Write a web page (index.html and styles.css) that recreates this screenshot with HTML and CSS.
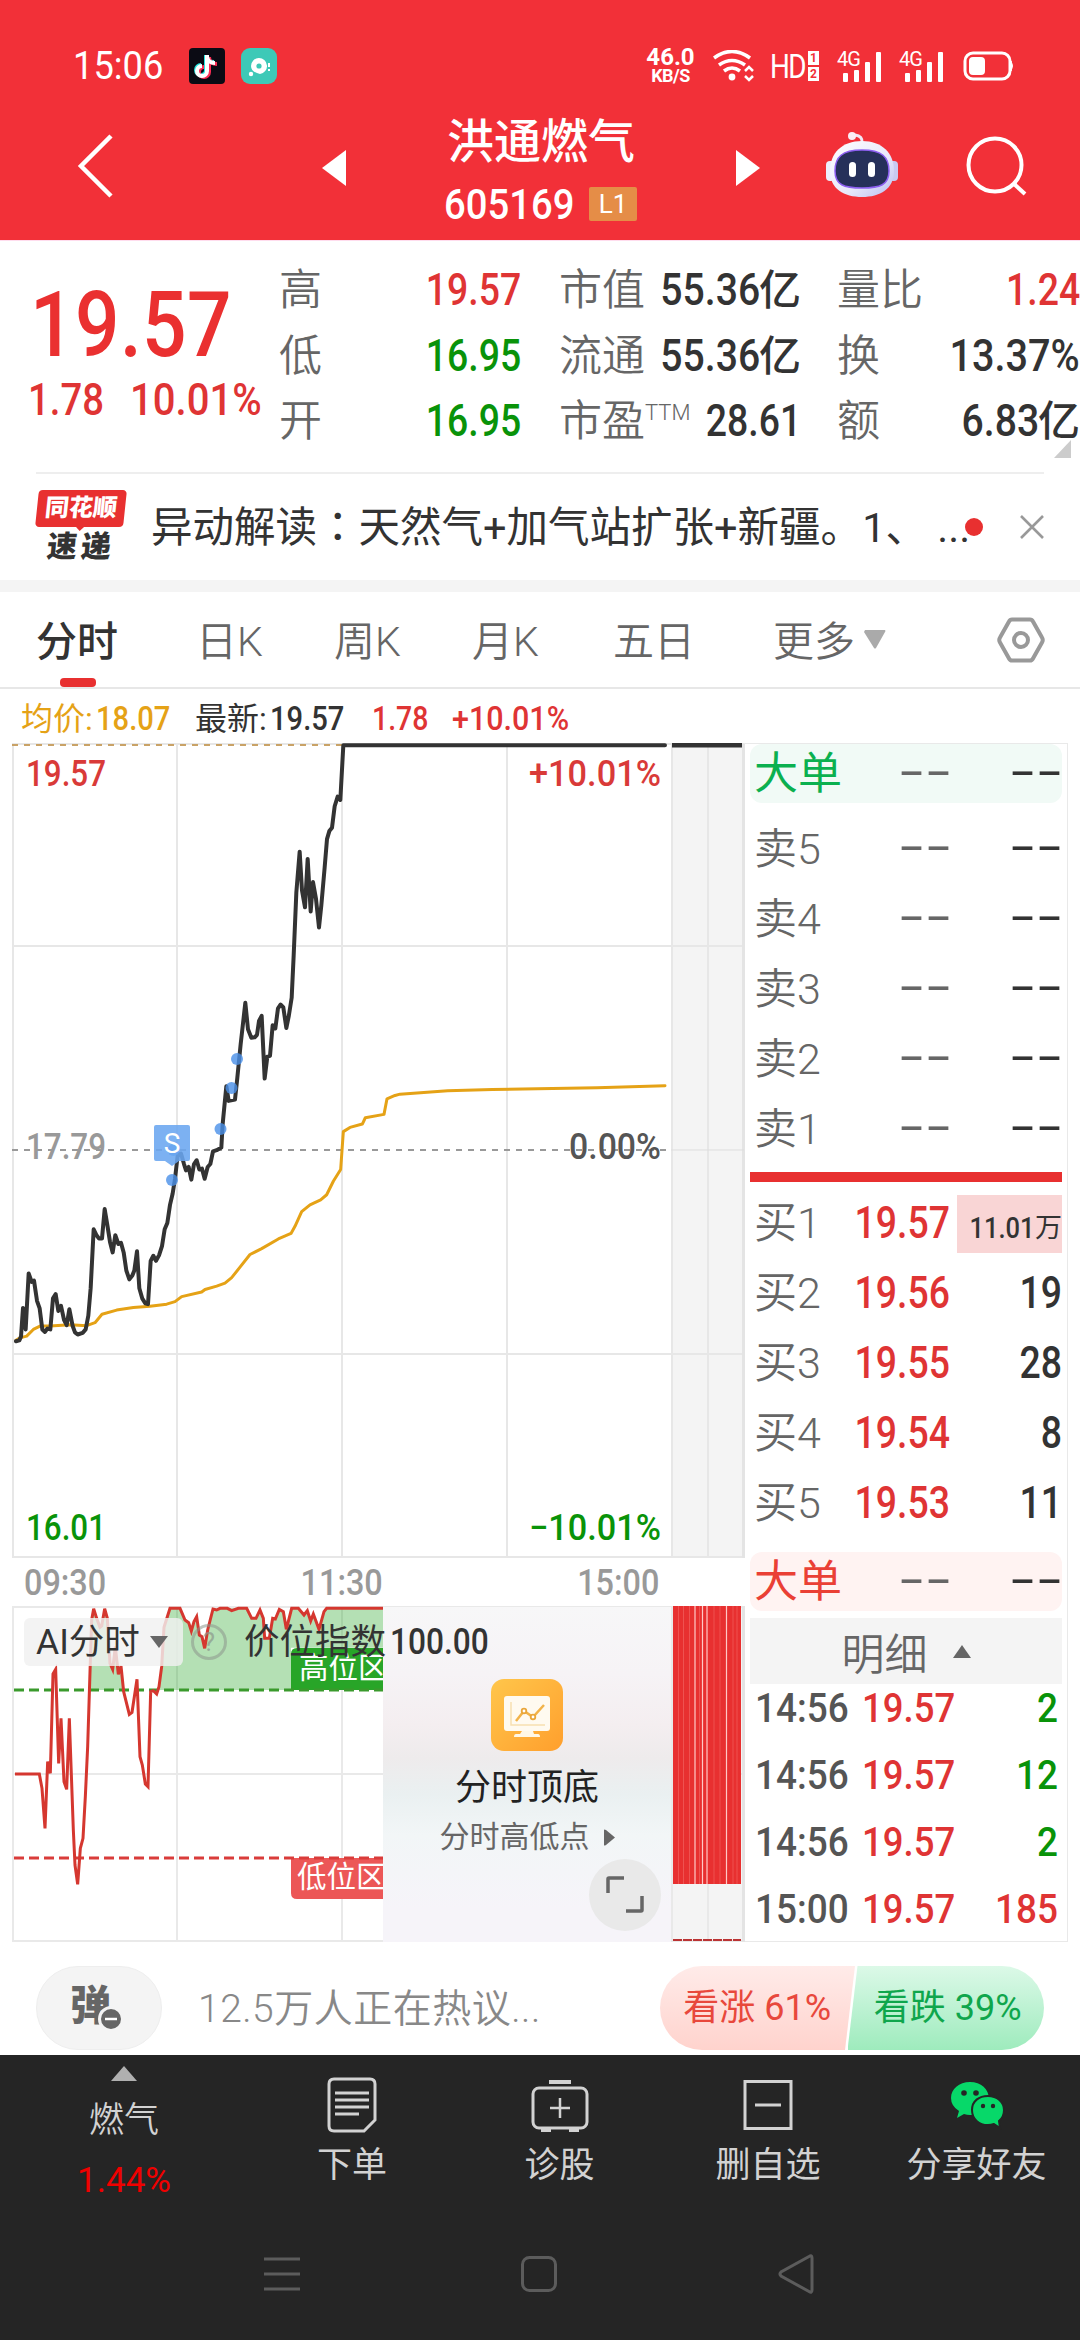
FILE: index.html
```html
<!DOCTYPE html>
<html lang="zh-CN">
<head>
<meta charset="utf-8">
<title>洪通燃气 605169</title>
<link rel="stylesheet" href="styles.css">
</head>
<body>
<div class="screen">
  <header class="top">
    <div class="status">
      <span class="clock"><b class="num">15:06</b></span>
      <svg class="app" width="36" height="36" viewBox="0 0 36 36"><rect width="36" height="36" rx="4" fill="#0b0b14"/><g fill="none" stroke-width="4"><path d="M18 8v15a5 5 0 1 1-5-5M18 8c0 5 4 7 8 7" stroke="#25e5e0" transform="translate(-1 -1)"/><path d="M18 8v15a5 5 0 1 1-5-5M18 8c0 5 4 7 8 7" stroke="#fb2c55" transform="translate(2 1)"/><path d="M18 7v16a5 5 0 1 1-5-5M18 8c0 5 4 7 8 7" stroke="#fff"/></g></svg>
      <svg class="app2" width="36" height="36" viewBox="0 0 36 36"><rect width="36" height="36" rx="9" fill="#3dc9b7"/><path d="M10 18a8 8 0 1 1 9 8l-3-1q-6-2-6-7z" fill="#fff"/><circle cx="18" cy="18" r="2.6" fill="#3dc9b7"/><circle cx="10" cy="26" r="2.2" fill="#fff"/><path d="M28 15v4M28 21v2" stroke="#fff" stroke-width="2"/></svg>
      <span class="speed"><b>46.0</b><i>KB/S</i></span>
      <svg class="wifi" width="42" height="32" viewBox="0 0 42 32"><g fill="none" stroke="#fff" stroke-width="3.6"><path d="M1 8q18-13 36 0M6 15q13-9 26 0M11 21q8-6 16 0"/></g><circle cx="19" cy="27" r="3.4" fill="#fff"/><path d="M32 21l4-4 4 4M32 26l4 4 4-4" fill="none" stroke="#fff" stroke-width="2.500"/></svg>
      <span class="hd"><b>HD</b><span class="sims"><i>1</i><i>2</i></span></span>
      <span class="cell"><i>4G</i><svg width="46" height="31" viewBox="0 0 46 31" fill="#fff"><rect x="6" y="22" width="5" height="9" rx="1"/><rect x="17" y="19" width="5" height="12" rx="1"/><rect x="28" y="11" width="5" height="20" rx="1"/><rect x="39" y="1" width="5" height="30" rx="1"/></svg></span>
      <span class="cell cell2"><i>4G</i><svg width="46" height="31" viewBox="0 0 46 31" fill="#fff"><rect x="6" y="22" width="5" height="9" rx="1"/><rect x="17" y="19" width="5" height="12" rx="1"/><rect x="28" y="11" width="5" height="20" rx="1"/><rect x="39" y="1" width="5" height="30" rx="1"/></svg></span>
      <svg class="bat" width="52" height="30" viewBox="0 0 52 30"><rect x="2" y="2" width="45" height="26" rx="8" fill="none" stroke="#fff" stroke-width="3"/><rect x="6" y="6" width="16" height="18" rx="4" fill="#fff"/><path d="M48 10q3 5 0 10z" fill="#fff" stroke="#fff"/></svg>
    </div>
    <div class="titlebar">
      <svg class="back" width="40" height="68" viewBox="0 0 40 68"><path d="M36 4L6 34l30 30" fill="none" stroke="#fff" stroke-width="4.5"/></svg>
      <svg class="prev" width="24" height="36" viewBox="0 0 24 36"><path d="M24 0v36L0 18z" fill="#fff"/></svg>
      <div class="stock">
        <h1>洪通燃气</h1>
        <div class="code"><b class="num">605169</b><span class="lv">L1</span></div>
      </div>
      <svg class="next" width="24" height="36" viewBox="0 0 24 36"><path d="M0 0v36l24-18z" fill="#fff"/></svg>
      <svg class="robot" width="72" height="68" viewBox="0 0 72 68">
        <defs><linearGradient id="rb" x1="0" y1="0" x2="1" y2="1"><stop offset="0" stop-color="#fff"/><stop offset=".6" stop-color="#e8e8fa"/><stop offset="1" stop-color="#b9bdf0"/></linearGradient></defs>
        <path d="M36 12q1-7-7-8" fill="none" stroke="#f2e8f5" stroke-width="3"/><circle cx="26" cy="5" r="4" fill="#fbeef5"/>
        <rect x="0" y="30" width="9" height="20" rx="4" fill="#eceefc"/><rect x="63" y="30" width="9" height="20" rx="4" fill="#c9caf1"/>
        <path d="M36 10c20 0 32 12 32 30S54 66 36 66 4 58 4 40 16 10 36 10z" fill="url(#rb)"/>
        <path d="M36 19c20 0 27 7 27 21s-9 17-27 17-27-3-27-17 7-21 27-21z" fill="#26305a" stroke="#8d5ff0" stroke-width="1.5"/>
        <rect x="23" y="31" width="7" height="15" rx="3.5" fill="#fff"/><rect x="42" y="31" width="7" height="15" rx="3.5" fill="#fff"/>
      </svg>
      <svg class="search" width="64" height="64" viewBox="0 0 64 64" fill="none" stroke="#fff" stroke-width="4"><circle cx="30" cy="30" r="26.5"/><path d="M48 48l12 11"/></svg>
    </div>
  </header>

  <section class="quote">
    <div class="last">
      <div class="price"><b class="num">19.57</b></div>
      <div class="chg"><b class="num">1.78</b><b class="num pct">10.01%</b></div>
    </div>
    <dl class="stats s1">
      <dt>高</dt><dd class="red"><b class="num r">19.57</b></dd>
      <dt>低</dt><dd class="green"><b class="num r">16.95</b></dd>
      <dt>开</dt><dd class="green"><b class="num r">16.95</b></dd>
    </dl>
    <dl class="stats s2">
      <dt>市值</dt><dd><b class="num r cap">55.36</b>亿</dd>
      <dt>流通</dt><dd><b class="num r cap">55.36</b>亿</dd>
      <dt>市盈<sup>TTM</sup></dt><dd><b class="num r">28.61</b></dd>
    </dl>
    <dl class="stats s3">
      <dt>量比</dt><dd class="red"><b class="num r">1.24</b></dd>
      <dt>换</dt><dd><b class="num r pct">13.37%</b></dd>
      <dt>额</dt><dd><b class="num r cap">6.83</b>亿</dd>
    </dl>
    <i class="corner"></i>
  </section>

  <section class="news">
    <div class="logo"><span class="brand">同花顺</span><span class="sub">速递</span></div>
    <p>异动解读<span class="colon" lang="zh-TW">：</span>天然气+加气站扩张+新疆。1、 ...</p>
    <i class="dot"></i>
    <svg width="24" height="24" viewBox="0 0 24 24"><path d="M1 1l22 22M23 1L1 23" stroke="#999" stroke-width="2.6"/></svg>
  </section>

  <nav class="tabs">
    <a class="on">分时</a><a>日K</a><a>周K</a><a>月K</a><a>五日</a><a class="more">更多<svg width="22" height="19" viewBox="0 0 22 19"><path d="M1 0h20q1 1 0 2L12 18q-1 1-2 0L0 2z" fill="#aaa"/></svg></a>
    <svg class="gear" width="48" height="46" viewBox="0 0 48 46" fill="none" stroke="#999" stroke-width="4"><path d="M15 2.500h18q2 0 3 2l9 16q1.500 2.500 0 5l-9 16q-1 2-3 2H15q-2 0-3-2l-9-16q-1.500-2.500 0-5l9-16q1-2 3-2z"/><circle cx="24" cy="23" r="7"/></svg>
  </nav>

  <div class="legend">
    <span class="avg">均价:<b class="num">18.07</b></span><span class="now">最新:<b class="num">19.57</b></span><span class="red c1"><b class="num">1.78</b></span><span class="red c2"><b class="num">+10.01%</b></span>
  </div>

  <main class="board">
    <div class="charts">
      <svg class="pricechart" width="746" height="816" viewBox="0 743 746 816">
        <rect x="671" y="744" width="73" height="813" fill="#f4f4f4"/>
        <g stroke="#e7e7e7" stroke-width="2" fill="none"><path d="M12 744H744M12 946H744M12 1354H744M12 1557H744M13 744V1558M177 744V1558M342 744V1558M507 744V1558M672 744V1558M708 744V1558"/></g>
        <path d="M743.500 744V1558" stroke="#e4e4e4" stroke-width="3"/>
        <path d="M12 745H342" stroke="#c9a266" stroke-width="2" stroke-dasharray="6 6"/>
        <path d="M12 1150H671" stroke="#999" stroke-width="2" stroke-dasharray="6 6"/>
        <path d="M671 1150H744" stroke="#ddd" stroke-width="1"/>
        <g transform="translate(0 720) scale(.33333 .42088)" fill="none" stroke-linejoin="round" stroke-linecap="round">
          <polyline vector-effect="non-scaling-stroke" stroke="#e5a216" stroke-width="3" points="48,1474 60,1468 80,1464 100,1448 120,1440 150,1440 210,1437 260,1439 285,1432 306,1412 350,1402 400,1396 450,1393 500,1388 525,1382 545,1370 605,1359 615,1353 650,1345 675,1338 695,1325 720,1300 750,1270 785,1256 835,1233 873,1220 885,1203 905,1168 930,1152 962,1140 980,1128 1000,1096 1022,1068 1030,978 1050,968 1087,960 1096,945 1152,937 1161,900 1185,892 1200,889 1343,881 1477,878 1791,874 1995,869"/>
          <polyline vector-effect="non-scaling-stroke" stroke="#333" stroke-width="4" points="48,1476 58,1474 63,1465 69,1397 77,1448 86,1315 95,1335 102,1332 111,1380 119,1398 127,1448 135,1454 142,1446 151,1448 159,1374 167,1364 175,1404 183,1392 192,1425 200,1438 208,1400 218,1440 225,1455 233,1460 248,1456 257,1448 265,1415 272,1350 281,1210 290,1225 297,1232 306,1232 314,1162 323,1205 330,1240 338,1265 346,1224 355,1245 363,1242 371,1265 379,1308 388,1329 397,1320 403,1308 411,1262 418,1350 427,1375 436,1386 444,1388 452,1285 460,1273 468,1285 477,1272 486,1250 494,1210 502,1195 510,1152 518,1125 525,1090 533,1035 543,1030 552,1055 558,1070 566,1062 574,1092 582,1055 590,1046 598,1068 606,1066 614,1090 623,1062 631,1055 639,1025 650,1022 664,1016 668,960 679,870 686,905 705,902 712,850 722,770 736,672 744,735 754,755 764,754 771,748 777,715 785,703 794,852 802,800 810,798 818,725 826,733 834,685 842,676 850,683 859,732 866,705 875,660 881,560 889,410 899,313 906,405 915,445 923,330 932,455 939,385 948,425 957,493 964,440 974,350 981,283 988,264 996,256 1004,205 1013,182 1021,190 1030,60 1995,60"/>
        </g>
        <rect x="672" y="742" width="70" height="5.500" fill="#333"/>
        <g fill="#4a90e8" fill-opacity=".8"><circle cx="172" cy="1180" r="6"/><circle cx="220.500" cy="1129" r="6"/><circle cx="231.500" cy="1088" r="6"/><circle cx="237" cy="1059" r="6"/><circle cx="173.500" cy="1150" r="6"/></g>
        <path d="M156 1125h32q2 0 2 2v32q0 2-2 2h-9l-7 5-7-5h-9q-2 0-2-2v-32q0-2 2-2z" fill="#6aa6f0" fill-opacity=".88"/>
        <text x="172" y="1153" text-anchor="middle" font-size="28" fill="#fff">S</text>
        <g font-size="36" font-weight="500">
          <text x="26" y="786" fill="#d93a38" textLength="80" lengthAdjust="spacingAndGlyphs">19.57</text>
          <text x="529" y="786" fill="#d93a38" textLength="132" lengthAdjust="spacingAndGlyphs">+10.01%</text>
          <text x="26" y="1159" fill="#999" textLength="80" lengthAdjust="spacingAndGlyphs">17.79</text>
          <text x="569" y="1159" fill="#555" textLength="92" lengthAdjust="spacingAndGlyphs">0.00%</text>
          <text x="26" y="1540" fill="#099309" textLength="80" lengthAdjust="spacingAndGlyphs">16.01</text>
          <text x="529" y="1540" fill="#099309" textLength="132" lengthAdjust="spacingAndGlyphs">−10.01%</text>
        </g>
      </svg>
      <div class="axis"><b class="num">09:30</b><b class="num ctr">11:30</b><b class="num r">15:00</b></div>
      <div class="indicator">
        <svg width="746" height="336" viewBox="0 1606 746 336">
          <defs><clipPath id="hi"><rect x="80" y="1600" width="303" height="90"/></clipPath><linearGradient id="og" x1="0" y1="0" x2="1" y2="1"><stop offset="0" stop-color="#ffc64b"/><stop offset="1" stop-color="#ff9f2d"/></linearGradient></defs>
          <rect x="671" y="1606" width="73" height="336" fill="#f4f4f4"/>
          <path d="M12 1607H744M12 1774H744M12 1941H744M13 1606V1942M177 1606V1942M342 1606V1942M672 1606V1942M708 1606V1942" stroke="#e9e9e9" stroke-width="2"/>
          <path d="M743.500 1606V1942" stroke="#e4e4e4" stroke-width="3"/>
          <path d="M297 1648h86v42h-92v-36q0-6 6-6z" fill="#28a528"/>
          <path d="M291 1858h92v41h-86q-6 0-6-6z" fill="#ec5757"/>
          <text x="299" y="1678" font-size="29.500" fill="#fff">高位区</text>
          <text x="297" y="1887" font-size="29.500" fill="#fff">低位区</text>
          <g clip-path="url(#hi)"><path transform="translate(0 1540) scale(.33333)" fill="#28a528" fill-opacity=".35" d="M268 450 275,240 281,206 290,235 300,262 305,258 314,206 322,235 330,370 338,388 346,320 355,403 363,378 371,455 388,523 396,517 411,418 420,650 427,675 436,732 444,740 452,455 460,452 470,462 477,440 485,380 492,262 510,205 540,205 555,240 566,248 574,273 582,245 590,230 598,285 606,290 614,325 623,270 639,207 650,210 660,205 740,205 755,235 768,235 780,210 790,235 794,295 808,295 818,235 826,237 838,208 850,215 859,268 875,205 895,205 912,225 922,212 932,243 940,222 957,268 972,215 980,205 1149,205V323H873V450z"/></g>
          <path d="M14 1690H383" stroke="#3a9a2c" stroke-width="3" stroke-dasharray="10 5"/>
          <path d="M14 1858H383" stroke="#d93c3a" stroke-width="3" stroke-dasharray="10 5"/>
          <polyline transform="translate(0 1540) scale(.33333)" fill="none" stroke="#d5372f" stroke-width="9" points="45,702 118,702 126,745 135,865 143,665 151,700 159,402 167,388 176,670 183,535 192,725 200,748 208,535 220,870 225,975 233,1033 241,925 249,895 256,770 263,620 268,460 275,240 281,206 290,235 300,262 305,258 314,206 322,235 330,370 338,388 346,320 355,403 363,378 371,455 388,523 396,517 411,418 420,650 427,675 436,732 444,740 452,455 460,452 470,462 477,440 485,380 492,262 510,205 540,205 555,240 566,248 574,273 582,245 590,230 598,285 606,290 614,325 623,270 639,207 650,210 660,205 682,205 695,212 715,205 740,205 755,235 768,235 780,210 790,235 794,295 808,295 818,235 826,237 838,208 850,215 859,268 875,205 895,205 912,225 922,212 932,243 940,222 957,268 972,215 980,205 1149,205"/>
          <rect x="673" y="1606" width="68" height="278" fill="#e83030"/>
          <path d="M695 1606v278M702.500 1606v278M707 1606v278M726.500 1606v278" stroke="#ffc9c6" stroke-width="1.200"/>
          <path d="M678.500 1606v278M683.500 1606v278M689.500 1606v278M699.500 1606v278M714 1606v278M720 1606v278M733 1606v278M737 1606v278" stroke="#f26a66" stroke-width=".6"/>
          <path d="M673 1940h68" stroke="#b33" stroke-width="2" stroke-dasharray="9 1"/>
        </svg>
        <div class="promo">
          <svg width="72" height="72" viewBox="0 0 72 72"><rect width="72" height="72" rx="13" fill="url(#og)"/><rect x="13" y="17" width="46" height="35" rx="3" fill="#fffaf0"/><path d="M31 52h11l1 3h4q2 0 2 3H23q0-3 2-3h4z" fill="#fff7e6"/><path d="M20 23v23h34" fill="none" stroke="#f8dfb0" stroke-width="1.500"/><path d="M25 42l8-10 9 6 11-12" fill="none" stroke="#f2b34a" stroke-width="2.500"/><circle cx="33" cy="32" r="2.300" fill="#fff" stroke="#eaa63a" stroke-width="1.800"/><circle cx="42" cy="38" r="2.300" fill="#fff" stroke="#eaa63a" stroke-width="1.800"/></svg>
          <strong>分时顶底</strong>
          <span>分时高低点<svg width="11" height="17" viewBox="0 0 11 17"><path d="M0 1q0-1 2 0l9 7.500L2 16q-2 1-2 0z" fill="#666"/></svg></span>
        </div>
        <div class="picker"><span class="drop">AI分时<svg width="18" height="12" viewBox="0 0 18 12"><path d="M0 0h18L9 12z" fill="#666"/></svg></span><i class="help">?</i><span class="idx">价位指数<b class="num">100.00</b></span></div>
        <svg class="expand" width="72" height="72" viewBox="0 0 72 72"><circle cx="36" cy="36" r="36" fill="#e9e9e9"/><path d="M19 34V20q0-1 1-1h15M37 52h15q1 0 1-1V37" fill="none" stroke="#666" stroke-width="3.500"/></svg>
      </div>
    </div>

    <div class="book">
      <div class="row big sell"><span>大单</span><em>--</em><em class="d">--</em></div>
      <div class="asks">
        <div class="row"><span>卖5</span><em>--</em><em class="d">--</em></div>
        <div class="row"><span>卖4</span><em>--</em><em class="d">--</em></div>
        <div class="row"><span>卖3</span><em>--</em><em class="d">--</em></div>
        <div class="row"><span>卖2</span><em>--</em><em class="d">--</em></div>
        <div class="row"><span>卖1</span><em>--</em><em class="d">--</em></div>
      </div>
      <div class="ratio"></div>
      <div class="bids">
        <div class="row"><span>买1</span><b class="num r p">19.57</b><div class="q hot"><b class="num r">11.01</b>万</div></div>
        <div class="row"><span>买2</span><b class="num r p">19.56</b><div class="q"><b class="num r">19</b></div></div>
        <div class="row"><span>买3</span><b class="num r p">19.55</b><div class="q"><b class="num r">28</b></div></div>
        <div class="row"><span>买4</span><b class="num r p">19.54</b><div class="q"><b class="num r">8</b></div></div>
        <div class="row"><span>买5</span><b class="num r p">19.53</b><div class="q"><b class="num r">11</b></div></div>
      </div>
      <div class="row big buy"><span>大单</span><em>--</em><em class="d">--</em></div>
      <div class="detail">明细<svg width="18" height="13" viewBox="0 0 18 13"><path d="M9 0l9 13H0z" fill="#666"/></svg></div>
      <div class="trades">
        <div><b class="num t">14:56</b><b class="num r red">19.57</b><b class="num r green">2</b></div>
        <div><b class="num t">14:56</b><b class="num r red">19.57</b><b class="num r green">12</b></div>
        <div><b class="num t">14:56</b><b class="num r red">19.57</b><b class="num r green">2</b></div>
        <div><b class="num t">15:00</b><b class="num r red">19.57</b><b class="num r red">185</b></div>
      </div>
    </div>
  </main>

  <section class="talk">
    <div class="danmu">弹<svg width="26" height="26" viewBox="0 0 26 26"><circle cx="13" cy="13" r="11.500" fill="#666" stroke="#f4f4f4" stroke-width="3"/><path d="M7 13h12" stroke="#fff" stroke-width="2.500"/></svg></div>
    <p>12.5万人正在热议...</p>
    <div class="vote"><span class="up">看涨 61%</span><span class="down">看跌 39%</span></div>
  </section>

  <footer>
    <div class="menu">
      <div class="sector"><svg width="26" height="15" viewBox="0 0 26 15"><path d="M13 0l13 15H0z" fill="#b0b0b0"/></svg><span>燃气</span><b>1.44%</b></div>
      <div class="item"><svg width="50" height="56" viewBox="0 0 50 56" fill="none" stroke="#d2d2d2" stroke-width="3"><path d="M7 2h36q5 0 5 5v36L37 54H7q-5 0-5-5V7q0-5 5-5z"/><path d="M8 16h34M8 23h34M8 30h34M8 37h24"/></svg><span>下单</span></div>
      <div class="item"><svg width="58" height="56" viewBox="0 0 58 56" fill="none" stroke="#d2d2d2" stroke-width="3"><rect x="2" y="11" width="54" height="40" rx="6"/><path d="M18 5h22" stroke-width="4"/><path d="M10 53h10M38 53h10" stroke-width="4"/><path d="M29 21v20M19 31h20" stroke-width="2.500"/></svg><span>诊股</span></div>
      <div class="item"><svg width="50" height="56" viewBox="0 0 50 56" fill="none" stroke="#d2d2d2" stroke-width="3"><rect x="2" y="4.500" width="46" height="47"/><path d="M12 28h26"/></svg><span>删自选</span></div>
      <div class="item"><svg width="56" height="56" viewBox="0 0 56 56"><path d="M21 5c11 0 19 7 19 17S32 38 21 38q-3 0-6-1l-7 4 2-7Q2 29 2 21C2 12 10 5 21 5z" fill="#07d869"/><path d="M39 19c9 0 16 6 16 14q0 7-5 11l1 7-6-4q-3 1-6 1c-9 0-16-6-16-15s7-14 16-14z" fill="#07d869" stroke="#252525" stroke-width="2"/><g fill="#252525"><circle cx="15" cy="16" r="2.800"/><circle cx="27" cy="16" r="2.800"/><circle cx="34" cy="29" r="2.200"/><circle cx="44" cy="29" r="2.200"/></g></svg><span>分享好友</span></div>
    </div>
    <div class="sys">
      <svg width="36" height="36" viewBox="0 0 36 36" stroke="#5c5c5c" stroke-width="3"><path d="M0 3h36M0 18h36M0 33h36"/></svg>
      <svg width="36" height="36" viewBox="0 0 36 36" fill="none" stroke="#5c5c5c" stroke-width="3"><rect x="1.500" y="1.500" width="33" height="33" rx="7"/></svg>
      <svg width="36" height="40" viewBox="0 0 36 40" fill="none" stroke="#5c5c5c" stroke-width="3"><path d="M31 2.500q3-2 3 1.500v32q0 3.500-3 1.500L3 22q-2-2 0-4z"/></svg>
    </div>
  </footer>
</div>
</body>
</html>
```
FILE: styles.css
```css
* { box-sizing: border-box; }
body { margin: 0; }
h1, p, dl, dt, dd { margin: 0; font-weight: 400; }
i, em { font-style: normal; }
svg { display: block; flex: none; }
.screen {
  width: 1080px; height: 2340px; overflow: hidden; background: #fff; color: #333;
  font-family: Roboto, "Noto Sans CJK SC", sans-serif;
}
/* tabular figures are drawn slightly condensed */
.num { display: inline-block; font-weight: 500; transform: scaleX(.85); transform-origin: left center; white-space: nowrap; }
.num.r { transform-origin: right center; }
.num.ctr { transform-origin: center; }
.red { color: #df3434; }
.green { color: #099309; }

.top { height: 240px; background: #f23038; color: #fff; }
.status { height: 100px; padding: 32px 46px 0 73px; display: flex; align-items: center; }
.clock { font-size: 39px; width: 116px; }
.clock .num { font-weight: 400; transform: scaleX(.93); }
.app2 { margin-left: 16px; }
.speed { margin-left: 369px; width: 49px; display: flex; flex-direction: column; align-items: center; line-height: 18px; }
.speed b { font-size: 24px; font-weight: 700; line-height: 20px; }
.speed i { font-size: 18px; font-weight: 700; letter-spacing: -.5px; }
.wifi { margin-left: 18px; }
.hd { margin-left: 15px; display: flex; align-items: center; width: 52px; }
.hd b { font-size: 34px; font-weight: 400; letter-spacing: -2px; width: 36px; transform: scaleX(.82); transform-origin: left; }
.sims { margin-left: 2px; display: flex; flex-direction: column; gap: 2px; }
.sims i { width: 11px; height: 14px; background: #fff; color: #f23038; font-size: 12px; font-weight: 700; line-height: 14px; text-align: center; }
.cell { position: relative; margin-left: 15px; }
.cell2 { margin-left: 16px; }
.cell i { position: absolute; left: 0; top: -2px; font-size: 20px; line-height: 20px; letter-spacing: -1px; }
.bat { margin-left: 18px; }
.titlebar { height: 140px; padding: 15px 51px 0 75px; display: flex; align-items: flex-start; }
.back { margin-top: 17px; }
.prev { margin: 35px 0 0 207px; }
.stock { width: 390px; }
.stock h1 { font-size: 47px; line-height: 54px; font-weight: 500; text-align: center; white-space: nowrap; }
.code { display: flex; align-items: center; margin-top: 16px; font-size: 43px; line-height: 38px; padding-left: 98px; }
.code .num { width: 145px; transform: scaleX(.89); }
.lv { width: 48px; height: 34px; background: #e58d47; border-radius: 2px; font-size: 26px; line-height: 35px; text-align: center; }
.next { margin-top: 35px; }
.robot { margin: 16px 0 0 66px; }
.search { margin: 20px 0 0 67px; }

.quote { position: relative; height: 232px; padding: 16px 0 0 28px; display: flex; border-top: 1px solid #fde; }
.last { width: 251px; color: #ea3030; }
.price { font-size: 90px; line-height: 100px; margin: 19px 0 0 2px; letter-spacing: .5px; white-space: nowrap; }
.price .num { transform: scaleX(.87); }
.chg { display: flex; font-size: 44px; line-height: 54px; margin-top: -3px; color: #df3434; }
.chg .num { width: 102px; transform: scaleX(.87); }
.chg .pct { transform: scaleX(.91); }
.stats { display: grid; grid-template-columns: 86px 1fr; grid-auto-rows: 65.500px; line-height: 67px; font-size: 43px; white-space: nowrap; }
.stats dt { color: #666; font-weight: 350; font-size: 43px; }
.stats dd { display: flex; justify-content: flex-end; font-weight: 500; font-size: 42px; }
.stats dd .num { font-size: 44px; }
.stats dd .pct { transform: scaleX(.9); }
.stats dd .cap { transform: scaleX(.89); }
.stats .cap { margin-right: -1px; }
.stats sup { font-size: 22px; line-height: 20px; vertical-align: 16px; }
.s1 { width: 242px; }
.s2 { width: 242px; margin-left: 38px; }
.s3 { width: 243px; margin-left: 36px; }
.corner { position: absolute; right: 9px; bottom: 14px; width: 17px; height: 18px; background: #ccc; clip-path: polygon(100% 0, 100% 100%, 0 100%); }

.news { position: relative; height: 108px; margin: 0 36px; border-top: 2px solid #eee; display: flex; align-items: center; }
.logo { width: 88px; height: 72px; margin-top: -2px; color: #333; text-align: center; display: flex; flex-direction: column; transform: translateX(1px); }
.brand { height: 37px; background: #e83030; border-radius: 4px; color: #fff; font-size: 24px; line-height: 37px; font-weight: 900; transform: skewX(-6deg); position: relative; }
.brand::after { content: ""; position: absolute; left: 40px; top: 36px; border: 5px solid transparent; border-top-color: #e83030; border-bottom: 0; }
.sub { font-size: 30px; line-height: 32px; margin-top: 4px; font-weight: 900; letter-spacing: 4px; transform: skewX(-6deg); }
.news p { margin-left: 27px; width: 812px; font-size: 41.500px; line-height: 60px; padding-top: 2px; white-space: nowrap; color: #333; }
.colon { font-family: "Noto Sans CJK TC", sans-serif; line-height: 1; }
.dot { width: 18px; height: 18px; border-radius: 50%; background: #e83030; margin-left: 2px; }
.news > svg { margin-left: auto; }

.tabs { height: 109px; border-top: 12px solid #f4f4f4; border-bottom: 2px solid #e7e7e7; padding-left: 36px; display: flex; align-items: center; font-size: 41px; color: #666; font-weight: 350; white-space: nowrap; }
.tabs a { position: relative; width: 138px; height: 95px; line-height: 100px; }
.tabs a.on { width: 160px; color: #333; font-weight: 500; }
.tabs .on::after { content: ""; position: absolute; left: 24px; bottom: 0; width: 36px; height: 9px; border-radius: 4px; background: #e83030; }
.tabs a:nth-child(4) { width: 141px; }
.tabs a:nth-child(5) { width: 160px; }
.tabs .more { width: 224px; display: flex; align-items: center; gap: 9px; padding-top: 4px; }
.more svg { margin-top: -4px; }

.legend { height: 54px; padding-left: 21px; display: flex; font-size: 32px; line-height: 60px; white-space: nowrap; }
.legend .num { font-size: 33.500px; }
.avg .num, .now .num { margin-left: 3px; transform: scaleX(.87); }
.avg { width: 174px; color: #e5a216; }
.now { width: 177px; }
.c1 { width: 80px; }
.c2 .num { transform: scaleX(.91); }

.board { height: 1199px; display: flex; }
.charts { width: 744px; }
.axis { height: 47px; padding: 0 85px 0 24px; display: flex; justify-content: space-between; font-size: 36px; line-height: 49px; color: #999; }
.axis .num { transform: scaleX(.9); }
.indicator { position: relative; height: 336px; }
.promo { position: absolute; left: 383px; top: 1px; width: 288px; height: 335px; padding-top: 72px; display: flex; flex-direction: column; align-items: center; background: linear-gradient(#f7f7f8, #f6f3f6 20%, #f4eef0 35%, #eeebec 45%, #eaf0f1 56%, #f2f6f7 68%, #f6f4f9 90%); color: #222; }
.promo strong { font-size: 36px; line-height: 44px; margin-top: 15px; font-weight: 400; }
.promo span { display: flex; align-items: center; gap: 14px; font-size: 30px; line-height: 36px; margin-top: 9px; color: #666; }
.picker { position: absolute; left: 24px; top: 12px; height: 48px; display: flex; align-items: center; font-size: 35.500px; line-height: 50px; white-space: nowrap; }
.drop { width: 159px; height: 48px; padding-left: 12px; background: rgba(240, 240, 240, .82); border-radius: 6px; display: flex; align-items: center; gap: 10px; }
.help { width: 36px; height: 36px; margin-left: 8px; border: 3px solid rgba(140, 150, 140, .55); border-radius: 50%; font-size: 26px; line-height: 31px; text-align: center; color: rgba(140, 150, 140, .7); }
.idx { margin-left: 17px; }
.idx .num { font-size: 36px; margin-left: 4px; transform: scaleX(.88); }
.expand { position: absolute; left: 589px; top: 253px; }

.book { width: 324px; border: 1px solid #e9e9e9; border-left: 0; padding: 0 5px 0 6px; }
.row { height: 70px; padding: 0 0 0 4px; display: flex; align-items: center; font-size: 43px; line-height: 60px; color: #666; }
.row span { width: 146px; font-weight: 350; white-space: nowrap; }
.row em { width: 111px; margin-top: -8px; font: 44px/50px "DejaVu Sans", sans-serif; white-space: nowrap; transform: scaleX(1.7); transform-origin: left; color: #666; }
.row em.d { width: 32px; color: #333; }
.row span + em { margin-left: -2px; }
.big { height: 59px; border-radius: 12px; }
.big span { font-size: 44px; font-weight: 400; }
.sell { background: #f1faf6; }
.sell span { color: #0bb04f; }
.buy { background: #fff3f2; margin-top: 14px; }
.buy span { color: #ea4035; }
.asks { padding-top: 11px; }
.ratio { height: 10px; margin-top: 8px; background: #e83030; }
.bids { padding-top: 6px; }
.bids .row span { width: 75px; }
.p { width: 121px; text-align: right; color: #df3434; font-size: 44px; }
.q { margin-left: auto; width: 105px; height: 58px; display: flex; justify-content: flex-end; align-items: center; font-size: 44px; color: #333; }
.hot { background: #f9d5d5; font-size: 27px; padding-top: 7px; margin-top: 2px; }
.hot .num { font-size: 30px; }
.detail { height: 66px; margin-top: 7px; background: #f4f4f4; display: flex; align-items: center; justify-content: center; gap: 25px; font-size: 43px; font-weight: 350; color: #666; }
.trades { padding: 0 4px 0 5px; margin-top: -9px; font-size: 41px; line-height: 67px; }
.trades div { height: 67px; display: grid; grid-template-columns: 104px 93px 1fr; text-align: right; }
.trades .t { text-align: left; color: #555; }
.trades .num { transform: scaleX(.9); }
.trades .num.red:nth-child(2) { margin-left: -8px; transform: scaleX(.89); }

.talk { height: 113px; padding: 24px 36px 0; display: flex; align-items: flex-start; }
.danmu { position: relative; width: 126px; height: 84px; border: 1px solid #eee; border-radius: 42px; background: #f4f4f4; font-size: 41px; line-height: 78px; font-weight: 900; color: #666; padding-left: 33px; }
.danmu svg { position: absolute; left: 61px; top: 39px; }
.talk p { margin-left: 36px; width: 462px; font-size: 39px; letter-spacing: .5px; line-height: 87px; font-weight: 350; color: #888; white-space: nowrap; }
.vote { width: 384px; height: 84px; border-radius: 42px; overflow: hidden; display: flex; font-size: 36px; line-height: 84px; text-align: center; position: relative; white-space: nowrap; }
.vote span { width: 196px; }
.up { background: linear-gradient(#ffebe9, #ffd3cd); color: #e8483c; clip-path: polygon(0 0, 195px 0, 185px 100%, 0 100%); }
.vote .down { width: 198px; margin-left: -7px; padding-left: 4px; background: linear-gradient(#dcf9e8, #9eebbd); color: #0fa64c; clip-path: polygon(10px 0, 100% 0, 100% 100%, 0 100%); }

footer { height: 285px; background: #252525; color: #d2d2d2; }
.menu { height: 160px; display: grid; grid-template-columns: 248px 208px 207px 210px 207px; font-size: 35px; white-space: nowrap; font-weight: 350; }
.menu > div { display: flex; flex-direction: column; align-items: center; }
.sector { padding-top: 11px; }
.sector span { line-height: 44px; margin-top: 18px; }
.sector b { color: #f00000; font-weight: 400; line-height: 44px; margin-top: 16px; }
.item { padding-top: 22px; }
.item span { line-height: 44px; margin-top: 11px; font-weight: 400; }
.sys { height: 118px; display: flex; align-items: center; padding-left: 264px; }
.sys svg + svg { margin-left: 221px; }
```
